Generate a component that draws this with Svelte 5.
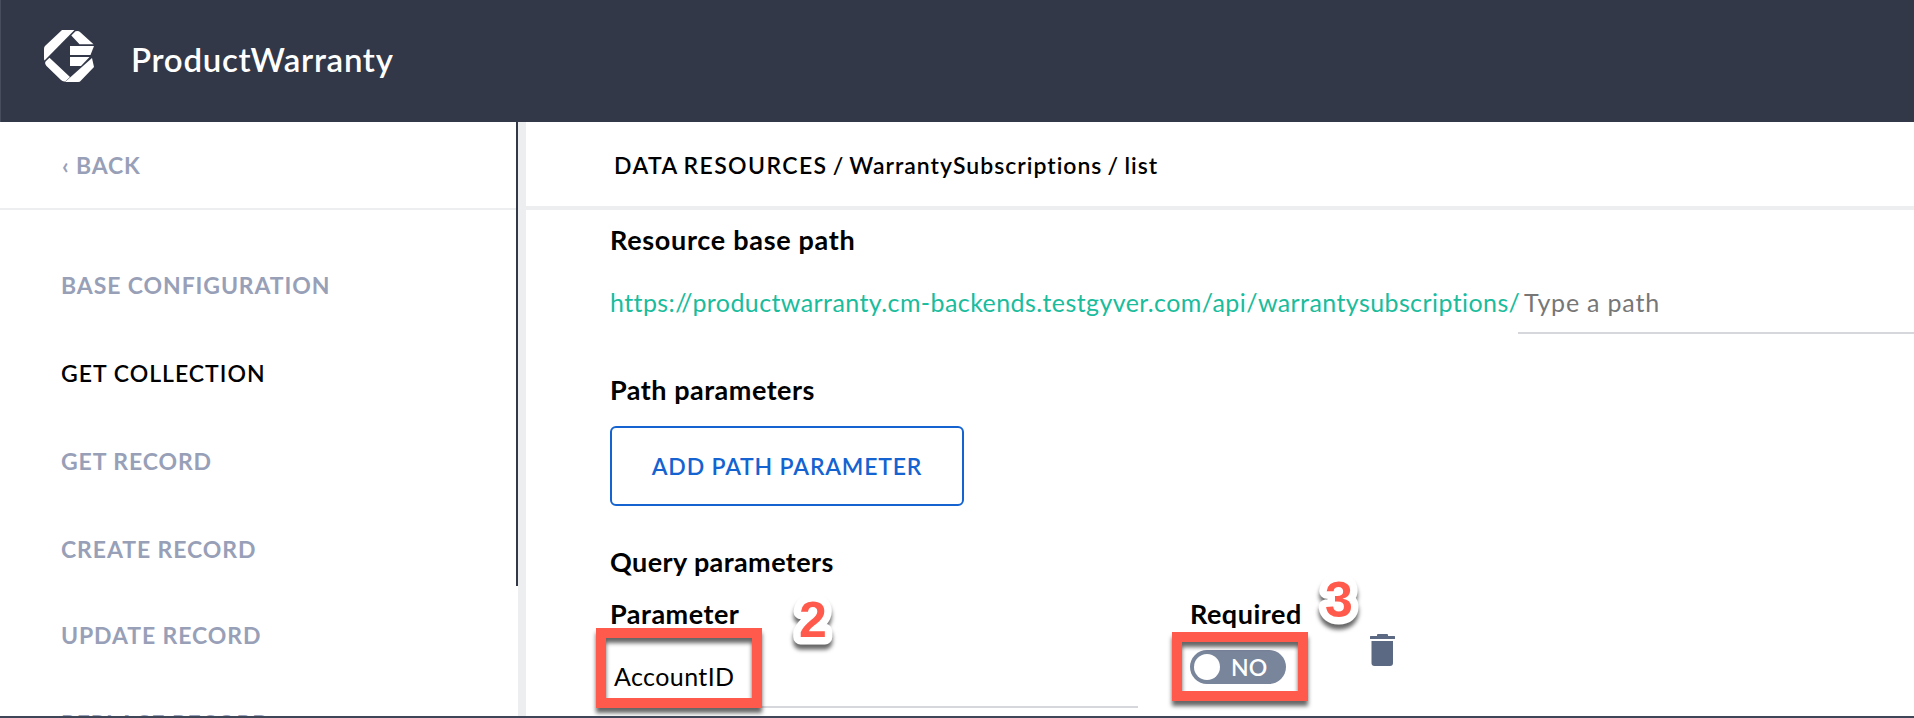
<script>
  const navItems = [
    { label: 'BASE CONFIGURATION' },
    { label: 'GET COLLECTION', active: true },
    { label: 'GET RECORD' },
    { label: 'CREATE RECORD' },
    { label: 'UPDATE RECORD' },
    { label: 'REPLACE RECORD' }
  ];
</script>

<div class="app">
  <header>
    <svg class="logo" width="50" height="52" viewBox="0 0 50 52" fill="#fff">
      <path d="M18 0H30.500L.5 30.500Q0 30 0 28V18.500Q0 17 1 16Z" />
      <path d="M31.500 1.300Q34.500 .5 36 2L49.500 14.300H35.500L27.300 5.600Z" />
      <path d="M26 16H50L46.500 25H26Z" />
      <path d="M26 27H45.500L37 36H26Z" />
      <path d="M2 31L5.500 27.800L26 47L21.500 51.200Q19 52 17 50L2.500 36Q0 33 2 31Z" />
      <path d="M48 28L50 37L37 50.500Q36 52 34 52H21Z" />
    </svg>
    <span class="title">ProductWarranty</span>
  </header>

  <div class="body">
    <aside>
      <div class="back"><span class="chev">‹</span><span>BACK</span></div>
      <nav>
        {#each navItems as item}
          <div class="item" class:active={item.active}>{item.label}</div>
        {/each}
      </nav>
    </aside>
    <div class="rail"><div class="thumb"></div></div>

    <main>
      <div class="crumbs"><span class="caps">DATA RESOURCES</span> / WarrantySubscriptions / list</div>
      <section>
        <h2 class="h-base">Resource base path</h2>
        <div class="path-row">
          <span class="url">https://productwarranty.cm-backends.testgyver.com/api/warrantysubscriptions/</span>
          <div class="path-input">Type a path</div>
        </div>
        <h2 class="h-path">Path parameters</h2>
        <button>ADD PATH PARAMETER</button>
        <h2 class="h-query">Query parameters</h2>
        <div class="params">
          <div class="col-name">
            <h3>Parameter</h3>
            <div class="field"><span>AccountID</span><div class="mark mark-a"></div></div>
            <svg class="num num-a" width="50" height="60"><text x="11" y="46">2</text></svg>
          </div>
          <div class="col-req">
            <h3>Required</h3>
            <div class="toggle"><i></i><span>NO</span></div>
            <div class="mark mark-b"></div>
            <svg class="num num-b" width="50" height="60"><text x="11" y="46">3</text></svg>
          </div>
          <svg class="trash" width="25" height="32" viewBox="0 0 25 32" fill="#5b6983">
            <path d="M0 2.500Q0 2 .5 2H7V1Q7 0 8 0H17Q18 0 18 1V2H24.500Q25 2 25 2.500V5H0Z" />
            <path d="M1.500 7H23V29Q23 32 20 32H4.500Q1.500 32 1.500 29Z" />
          </svg>
        </div>
      </section>
    </main>
  </div>
</div>

<style>
  :global(body) { background: #fff; }
  .app {
    position: relative;
    display: flex;
    flex-direction: column;
    height: 718px;
    overflow: hidden;
    box-sizing: border-box;
    border-bottom: 2px solid #3f4658;
    font-family: Lato, "Open Sans", sans-serif;
    font-variant-ligatures: none;
    color: #000;
    white-space: nowrap;
  }
  header {
    display: flex;
    flex: none;
    height: 122px;
    box-sizing: border-box;
    padding-left: 43px;
    background: #323848;
    border-left: 1px solid #474d5c;
  }
  .logo { margin-top: 30px; }
  .title {
    margin: 29px 0 0 37px;
    line-height: 61px;
    font-size: 33px;
    font-weight: 600;
    letter-spacing: .7px;
    color: #fff;
  }
  .body { display: flex; flex: none; height: 594px; }
  aside {
    width: 516px;
    flex: none;
    overflow: hidden;
    font-size: 23px;
    font-weight: 700;
    letter-spacing: .9px;
    color: #98a0b8;
  }
  .back {
    display: flex;
    height: 86px;
    line-height: 87px;
    padding-left: 62px;
    border-bottom: 2px solid #edeeef;
    letter-spacing: .8px;
  }
  .chev { width: 14px; }
  nav { padding: 31px 0 0 61px; }
  .item { height: 88px; line-height: 88px; }
  .item.active { color: #000; font-weight: 600; letter-spacing: 1px; }
  .item:nth-child(5) { height: 86px; line-height: 85px; }
  .rail { width: 10px; flex: none; background: linear-gradient(90deg, #fff 2px, #edeef0 2px); }
  .thumb { width: 2px; height: 464px; background: #323848; }
  main { flex: 1; min-width: 0; }
  .crumbs {
    height: 84px;
    line-height: 87px;
    padding-left: 88px;
    border-bottom: 4px solid #edeef0;
    font-size: 23px;
    font-weight: 600;
    letter-spacing: 1px;
    word-spacing: -1.5px;
  }
  .caps { letter-spacing: 1.4px; }
  section { padding: 12px 0 0 84px; }
  h2, h3 { margin: 0; line-height: 36px; height: 36px; font-size: 27px; font-weight: 700; letter-spacing: .5px; }
  .h-base { letter-spacing: .7px; }
  .path-row { display: flex; height: 62px; margin-top: 14px; font-size: 25px; line-height: 61px; }
  .url { color: #1abc9c; width: 908px; flex: none; letter-spacing: .41px; }
  .path-input { flex: 1; box-sizing: border-box; height: 62px; padding-left: 6px; border-bottom: 2px solid #d6d6dd; color: #777; letter-spacing: .8px; }
  .h-path { margin-top: 38px; }
  button {
    display: block;
    box-sizing: border-box;
    width: 354px;
    height: 80px;
    margin: 18px 0 0;
    padding: 0;
    border: 2px solid #1463d0;
    border-radius: 6px;
    background: #fff;
    color: #1463d0;
    font: 600 23px/76px Lato, sans-serif;
    letter-spacing: .8px;
  }
  .h-query { margin-top: 37px; line-height: 38px; letter-spacing: .4px; }
  .params { display: grid; grid-template-columns: 528px 128px 25px; column-gap: 52px; margin-top: 17px; }
  .col-name, .col-req { position: relative; }
  .field {
    position: relative;
    height: 60px;
    padding: 14px 0 0 4px;
    border-bottom: 2px solid #d6d6dd;
    line-height: 61px;
    font-size: 25px;
    letter-spacing: .4px;
  }
  .toggle {
    display: flex;
    align-items: center;
    width: 96px;
    height: 34px;
    margin-top: 18px;
    border-radius: 17px;
    background: #79859b;
    color: #fff;
    font-size: 23px;
    line-height: 34px;
    font-weight: 600;
  }
  .toggle i { width: 26px; height: 26px; margin: 0 11px 0 4px; border-radius: 50%; background: #fff; }
  .trash { margin: 38px 0 0; }
  .mark {
    position: absolute;
    box-sizing: border-box;
    border: 10px solid #ff5a4c;
    filter: drop-shadow(0 5px 2px rgba(0, 0, 0, .6));
  }
  .mark-a { left: -14px; top: -4px; width: 166px; height: 80px; }
  .mark-b { left: -18px; top: 36px; width: 136px; height: 69px; }
  .num {
    position: absolute;
    overflow: visible;
    font: 700 50px "Liberation Sans", Arial, sans-serif;
    fill: #ff5a4c;
    stroke: #fff;
    stroke-width: 15px;
    stroke-linejoin: round;
    paint-order: stroke;
    filter: drop-shadow(0 5px 2px rgba(0, 0, 0, .6));
  }
  .num-a { left: 178px; top: -5px; }
  .num-b { left: 124px; top: -25px; }
</style>
